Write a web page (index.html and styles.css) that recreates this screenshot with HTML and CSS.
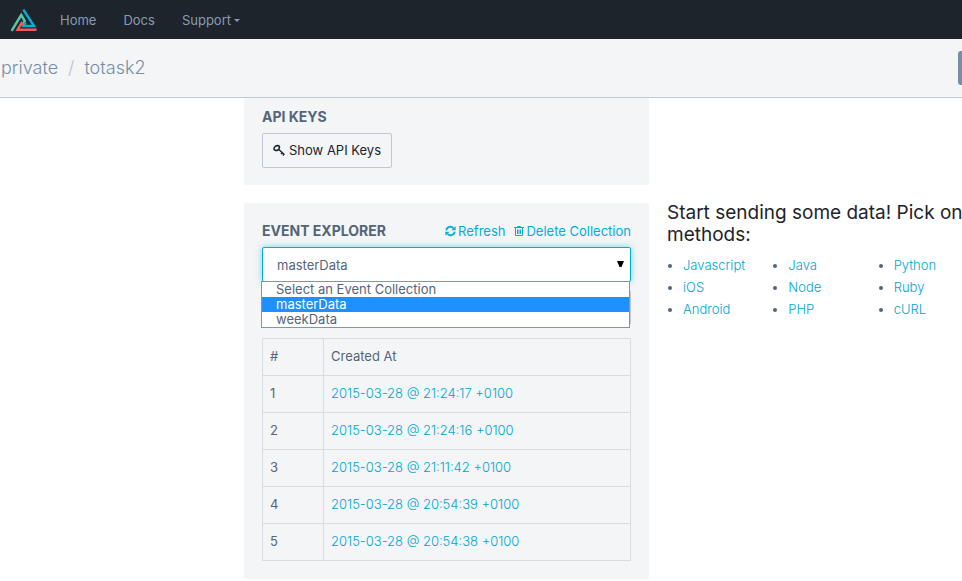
FILE: index.html
```html
<!DOCTYPE html>
<html lang="en">
<head>
<meta charset="utf-8">
<meta name="viewport" content="width=device-width, initial-scale=1">
<title>totask2</title>
<link rel="stylesheet" href="styles.css">
</head>
<body>
<header class="navbar">
  <a class="logo" href="#" aria-label="Home page">
    <svg width="28" height="24" viewBox="0 0 28 24" fill="none" stroke-width="2.5">
      <path stroke="#50c8a8" d="M1.6 22.8 11.2 7l3.6 6-1.8 3.2"/>
      <path stroke="#00afd7" d="M13.3 1.6 24 18H13.6l1.9-3.3"/>
      <path stroke="#f35757" d="M26.6 21.8H7.6l3.9-6.6 1.4 2.4"/>
    </svg>
  </a>
  <nav class="links">
    <a href="#">Home</a>
    <a href="#">Docs</a>
    <a href="#">Support<span class="caret"></span></a>
  </nav>
</header>
<div class="crumbbar">
  <nav class="crumbs" aria-label="Breadcrumb">
    <a href="#">private</a><span class="slash">/</span><a href="#">totask2</a>
  </nav>
  <button class="edge-button" type="button" aria-label="Menu"></button>
</div>
<main class="layout">
  <div class="column">
    <section class="panel keys">
      <h2>API KEYS</h2>
      <button class="outline" type="button">
        <svg width="12" height="12" viewBox="0 0 12 12" fill="none" stroke="#1d242b">
          <path stroke-width="1.6" d="M1 5.2C.8 3 2.8 1.4 5 1.6c1.6.2 1.6 1.4 1.2 2.6C5.6 5.800 4.200 6.600 2.600 6.400 1.600 6.300 1.100 6 1 5.200z"/>
          <path stroke-width="1.4" d="m5.800 5.400 5 4.600M8 10l1.500-1.600M9.800 11.400l1.600-1.600"/>
        </svg>Show API Keys</button>
    </section>
    <section class="panel explorer">
      <div class="panel-head">
        <h2><label for="collection">EVENT EXPLORER</label></h2>
        <div class="actions">
          <a href="#"><svg width="11" height="12" viewBox="0 0 12 12" fill="none" stroke="#00afd7" stroke-width="2"><path d="M1.4 5.2A4.5 4.5 0 0 1 9.3 3M10.6 6.8A4.5 4.5 0 0 1 2.7 9"/><path fill="#00afd7" stroke="none" d="M11.6.8v4.5H7zM.4 11.200V6.700H5z"/></svg>Refresh</a>
          <a href="#"><svg width="10" height="12" viewBox="0 0 10 12" fill="none" stroke="#00afd7"><path d="M0 2.5h10M3.5 2.5v-1h3v1M1.5 3v7.5h7V3M3.500 4.500V9M5 4.500V9M6.500 4.500V9"/></svg>Delete Collection</a>
        </div>
      </div>
      <div class="picker">
        <select id="collection">
          <option>Select an Event Collection</option>
          <option selected>masterData</option>
          <option>weekData</option>
        </select>
        <svg class="arrow" width="7" height="6" viewBox="0 0 7 6"><path d="M0 0h7L4.5 6h-2z"/></svg>
        <ul class="menu" role="listbox" aria-label="Event collections">
          <li role="option">Select an Event Collection</li>
          <li role="option" class="active" aria-selected="true">masterData</li>
          <li role="option">weekData</li>
        </ul>
      </div>
      <div class="filter"></div>
      <table>
        <thead><tr><th class="num">#</th><th>Created At</th></tr></thead>
        <tbody>
          <tr><td>1</td><td><a href="#">2015-03-28 @ 21:24:17 +0100</a></td></tr>
          <tr><td>2</td><td><a href="#">2015-03-28 @ 21:24:16 +0100</a></td></tr>
          <tr><td>3</td><td><a href="#">2015-03-28 @ 21:11:42 +0100</a></td></tr>
          <tr><td>4</td><td><a href="#">2015-03-28 @ 20:54:39 +0100</a></td></tr>
          <tr><td>5</td><td><a href="#">2015-03-28 @ 20:54:38 +0100</a></td></tr>
        </tbody>
      </table>
    </section>
  </div>
  <section class="start">
    <h1>Start sending some data! Pick on<br>methods:</h1>
    <div class="methods">
      <ul><li><a href="#">Javascript</a></li><li><a href="#">iOS</a></li><li><a href="#">Android</a></li></ul>
      <ul><li><a href="#">Java</a></li><li><a href="#">Node</a></li><li><a href="#">PHP</a></li></ul>
      <ul><li><a href="#">Python</a></li><li><a href="#">Ruby</a></li><li><a href="#">cURL</a></li></ul>
    </div>
  </section>
</main>
</body>
</html>
```
FILE: styles.css
```css
* { box-sizing: border-box; }
body {
  margin: 0;
  background: #fff;
  color: #556579;
  font: 13px/22px Inter, "Liberation Sans", sans-serif;
  overflow-x: hidden;
}
a { color: #00afd7; text-decoration: none; }
h1, h2, ul { margin: 0; padding: 0; font-size: inherit; }
button, select { font: inherit; }
svg { flex: none; }

.navbar {
  display: flex;
  align-items: center;
  gap: 22px;
  height: 39px;
  padding-left: 10px;
  background: #1d242b;
}
.logo { display: flex; }
.links { display: flex; gap: 27px; }
.links a { color: #8a9bb0; }
.caret {
  display: inline-block;
  margin-left: 3px;
  border: 3px solid transparent;
  border-top-color: #8a9bb0;
  border-bottom: 0;
  vertical-align: middle;
}

.crumbbar {
  display: flex;
  align-items: center;
  justify-content: space-between;
  height: 59px;
  padding-left: 1px;
  background: #f3f5f7;
  border-bottom: 1px solid #c0c8d2;
}
.crumbs { display: flex; font-size: 18px; font-weight: 300; }
.crumbs a { color: #788da4; }
.slash { padding: 0 10px; color: #b8c2cf; }
.edge-button {
  width: 4px;
  height: 34px;
  padding: 0;
  border: 0;
  border-radius: 3px 0 0 3px;
  background: #7b8da4;
}

.layout { display: grid; grid-template-columns: 244fr 405fr 313fr; }
.column { grid-column: 2; min-width: 0; }
.panel {
  padding: 17px 18px;
  margin-bottom: 18px;
  border-radius: 3px;
  background: #f3f5f7;
}
.panel h2 { font-size: 14px; font-weight: 700; line-height: 22px; }
.keys { padding-top: 8px; border-radius: 0 0 3px 3px; }
.outline {
  display: flex;
  align-items: center;
  gap: 4px;
  height: 35px;
  margin-top: 5px;
  padding: 0 10px 2px;
  border: 1px solid #c0c8d6;
  border-radius: 2px;
  background: transparent;
  color: #1d242b;
}
.explorer { margin-bottom: 0; padding-bottom: 18px; }
.panel-head { display: flex; justify-content: space-between; margin-bottom: 5px; }
.actions { display: flex; gap: 9px; }
.actions a { display: flex; align-items: center; gap: 2px; }

.picker { position: relative; }
select {
  display: block;
  width: 100%;
  height: 35px;
  padding: 0 14px;
  appearance: none;
  border: 1px solid #00afd7;
  border-radius: 2px;
  background: #fff;
  color: #556579;
  box-shadow: 0 0 6px rgba(0, 175, 215, .5);
  outline: 0;
}
.arrow { position: absolute; top: 14px; right: 7px; }
.menu {
  position: absolute;
  top: 34px;
  left: -1px;
  width: 100%;
  border: 1px solid #7b98b0;
  background: #fff;
  list-style: none;
  line-height: 15px;
}
.menu li { padding-left: 14px; }
.menu .active { background: #1e90ff; color: #fff; }
.filter {
  height: 35px;
  margin: 8px 0 13px;
  border: 1px solid #c0c8d6;
  border-radius: 2px;
}

table { width: 100%; border-collapse: collapse; table-layout: fixed; }
th, td {
  height: 37px;
  padding: 0 7px 2px;
  border: 1px solid #d8dde4;
  text-align: left;
  font-weight: 400;
}
td a, .methods a { font-weight: 300; color: #00a5cf; }
.num { width: 61px; }

.start { min-width: 0; padding: 104px 0 0 18px; }
h1 {
  color: #1d242b;
  font-size: 19px;
  font-weight: 400;
  line-height: 22px;
  white-space: nowrap;
}
.methods { display: grid; grid-template-columns: repeat(3, 1fr); margin: 8px -21px 0 0; }
.methods ul { padding-left: 16px; }
```
